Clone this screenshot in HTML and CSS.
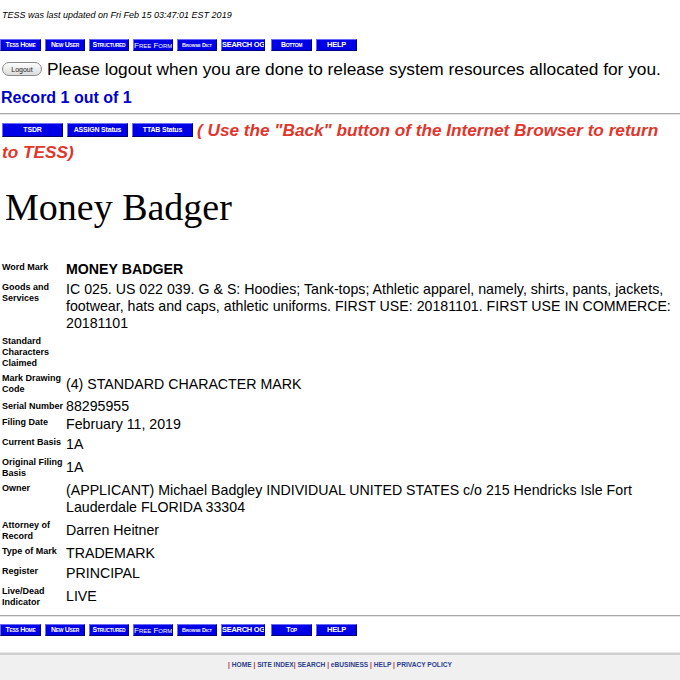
FILE: index.html
```html
<!DOCTYPE html>
<html lang="en">
<head>
    <meta charset="UTF-8">
    <title>Trademark Electronic Search System (TESS)</title>
    <link rel="stylesheet" href="styles.css">
</head>
<body>
    <p class="updated">TESS was last updated on Fri Feb 15 03:47:01 EST 2019</p>

    <!-- top navigation -->
    <div class="nav-bar">
        <a class="nav-btn w41">Tess Home</a>
        <a class="nav-btn">New User</a>
        <a class="nav-btn">Structured</a>
        <a class="nav-btn big">Free Form</a>
        <a class="nav-btn tiny">Browse Dict</a>
        <a class="nav-btn caps w44">SEARCH OG</a>
        <a class="nav-btn w41 gap-l">Bottom</a>
        <a class="nav-btn caps w41">HELP</a>
    </div>

    <div class="logout-row">
        <button class="logout-btn">Logout</button>
        <span class="logout-msg">Please logout when you are done to release system resources allocated for you.</span>
    </div>

    <h3 class="record">Record 1 out of 1</h3>
    <hr class="rule">

    <div class="status-row"><a class="status-btn">TSDR</a><a class="status-btn">ASSIGN Status</a><a class="status-btn">TTAB Status</a><span class="back-note">( Use the "Back" button of the Internet Browser to return to TESS)</span></div>

    <h1 class="mark-title">Money Badger</h1>

    <!-- record details -->
    <table class="record-table">
        <tr>
            <td class="lbl">Word Mark</td>
            <td class="val strong">MONEY BADGER</td>
        </tr>
        <tr>
            <td class="lbl">Goods and Services</td>
            <td class="val">IC 025. US 022 039. G &amp; S: Hoodies; Tank-tops; Athletic apparel, namely, shirts, pants, jackets, footwear, hats and caps, athletic uniforms. FIRST USE: 20181101. FIRST USE IN COMMERCE: 20181101</td>
        </tr>
        <tr>
            <td class="lbl">Standard Characters Claimed</td>
            <td class="val"></td>
        </tr>
        <tr>
            <td class="lbl tall">Mark Drawing Code</td>
            <td class="val mid">(4) STANDARD CHARACTER MARK</td>
        </tr>
        <tr>
            <td class="lbl">Serial Number</td>
            <td class="val serial">88295955</td>
        </tr>
        <tr>
            <td class="lbl">Filing Date</td>
            <td class="val">February 11, 2019</td>
        </tr>
        <tr>
            <td class="lbl">Current Basis</td>
            <td class="val">1A</td>
        </tr>
        <tr>
            <td class="lbl">Original Filing Basis</td>
            <td class="val mid">1A</td>
        </tr>
        <tr>
            <td class="lbl">Owner</td>
            <td class="val">(APPLICANT) Michael Badgley INDIVIDUAL UNITED STATES c/o 215 Hendricks Isle Fort Lauderdale FLORIDA 33304</td>
        </tr>
        <tr>
            <td class="lbl">Attorney of Record</td>
            <td class="val mid">Darren Heitner</td>
        </tr>
        <tr>
            <td class="lbl">Type of Mark</td>
            <td class="val">TRADEMARK</td>
        </tr>
        <tr>
            <td class="lbl">Register</td>
            <td class="val">PRINCIPAL</td>
        </tr>
        <tr>
            <td class="lbl">Live/Dead Indicator</td>
            <td class="val mid">LIVE</td>
        </tr>
    </table>

    <hr class="rule">

    <!-- bottom navigation -->
    <div class="nav-bar bottom">
        <a class="nav-btn w41">Tess Home</a>
        <a class="nav-btn">New User</a>
        <a class="nav-btn">Structured</a>
        <a class="nav-btn big">Free Form</a>
        <a class="nav-btn tiny">Browse Dict</a>
        <a class="nav-btn caps w44">SEARCH OG</a>
        <a class="nav-btn w41 gap-l">Top</a>
        <a class="nav-btn caps w41">HELP</a>
    </div>

    <div class="footer">
        <span class="sep">|</span> <a>HOME</a> <span class="sep">|</span> <a>SITE INDEX</a><span class="sep">|</span> <a>SEARCH</a> <span class="sep">|</span> <a>eBUSINESS</a> <span class="sep">|</span> <a>HELP</a> <span class="sep">|</span> <a>PRIVACY POLICY</a>
    </div>
</body>
</html>
```

FILE: styles.css
```css
* {
    box-sizing: border-box;
}

body {
    margin: 0;
    padding: 0;
    background-color: #fff;
    font-family: 'Liberation Sans', Arial, sans-serif;
    color: #000;
}

.updated {
    margin: 0;
    padding: 10px 0 0 2px;
    font-size: 9px;
    font-style: italic;
    line-height: 11px;
}

/* image-style navigation buttons */
.nav-bar {
    display: flex;
    gap: 4px;
    margin-top: 18px;
}

.nav-bar.bottom {
    margin-top: 7px;
}

.nav-btn {
    width: 40px;
    height: 12px;
    background-color: #0000e6;
    border-top: 1px solid #6a6aff;
    border-left: 1px solid #6a6aff;
    border-bottom: 1px solid #00007a;
    border-right: 1px solid #00007a;
    color: #fff;
    font-size: 7px;
    font-weight: bold;
    font-variant: small-caps;
    letter-spacing: -0.3px;
    line-height: 10px;
    text-align: center;
    white-space: nowrap;
    overflow: hidden;
    cursor: pointer;
}

.nav-btn.big {
    font-size: 8px;
    font-weight: normal;
    letter-spacing: 0;
    line-height: 11px;
}

.nav-btn.tiny {
    font-size: 5.5px;
    letter-spacing: -0.1px;
}

.nav-btn.caps {
    font-size: 7.5px;
    font-variant: normal;
    letter-spacing: -0.3px;
    line-height: 9px;
}

.nav-btn.w41 {
    width: 41px;
}

.nav-btn.w44 {
    width: 44px;
}

.nav-btn.gap-l {
    margin-left: 2px;
}

.logout-row {
    display: flex;
    align-items: center;
    gap: 5px;
    margin-top: 8px;
    padding-left: 2px;
}

.logout-btn {
    width: 40px;
    height: 14px;
    padding: 0;
    border: 1px solid #8a8a8a;
    border-radius: 7px;
    background: linear-gradient(#fdfdfd, #dcdcdc);
    font-family: 'Liberation Sans', Arial, sans-serif;
    font-size: 7px;
    color: #222;
}

.logout-msg {
    font-size: 17.3px;
    line-height: 20px;
    white-space: nowrap;
}

.record {
    margin: 9px 0 0 0;
    padding-left: 1px;
    font-size: 16px;
    line-height: 20px;
    color: #0000cc;
}

.rule {
    margin: 5px 0 0 0;
    border: none;
    border-top: 1px solid #a8a8a8;
    border-bottom: 1px solid #e6e6e6;
    height: 2px;
}

.status-row {
    margin-top: 4px;
    padding: 0 12px 0 2px;
    font-size: 17.2px;
    line-height: 22px;
}

.status-btn {
    display: inline-block;
    width: 61px;
    height: 14px;
    margin-right: 4px;
    background-color: #0000e6;
    border-top: 1px solid #7070ff;
    border-left: 1px solid #7070ff;
    border-bottom: 1px solid #00006e;
    border-right: 1px solid #00006e;
    color: #fff;
    font-size: 7px;
    font-weight: bold;
    letter-spacing: -0.2px;
    line-height: 12px;
    text-align: center;
    vertical-align: 4px;
    cursor: pointer;
}

.back-note {
    color: #e0362c;
    font-weight: bold;
    font-style: italic;
}

.mark-title {
    margin: 22px 0 0 5px;
    font-family: 'Liberation Serif', 'Times New Roman', serif;
    font-size: 38px;
    font-weight: normal;
    line-height: 44px;
}

.record-table {
    width: 100%;
    margin-top: 31px;
    border-collapse: collapse;
}

.record-table td {
    vertical-align: top;
    padding: 0;
}

.lbl {
    width: 66px;
    padding: 2px !important;
    font-size: 9px;
    font-weight: bold;
    line-height: 11px;
}

.lbl.tall {
    padding-bottom: 4px !important;
}

.val {
    padding: 1px 3px 2px 0 !important;
    font-size: 14.2px;
    line-height: 17px;
}

.val.mid {
    vertical-align: middle !important;
}

.val.serial {
    padding-top: 0 !important;
    padding-bottom: 1px !important;
    line-height: 15px;
}

.val.strong {
    font-weight: bold;
}

.footer {
    margin-top: 16px;
    border-top: 1px solid #e8e8e8;
    height: 40px;
    padding-top: 8px;
    background-color: #f0f0f0;
    box-shadow: inset 0 2px 0 #cfcfcf;
    text-align: center;
    font-size: 6.6px;
    font-weight: bold;
    color: #2c3e8c;
}

.footer a {
    color: #2c3e8c;
}

.footer .sep {
    color: #b03030;
}
```
